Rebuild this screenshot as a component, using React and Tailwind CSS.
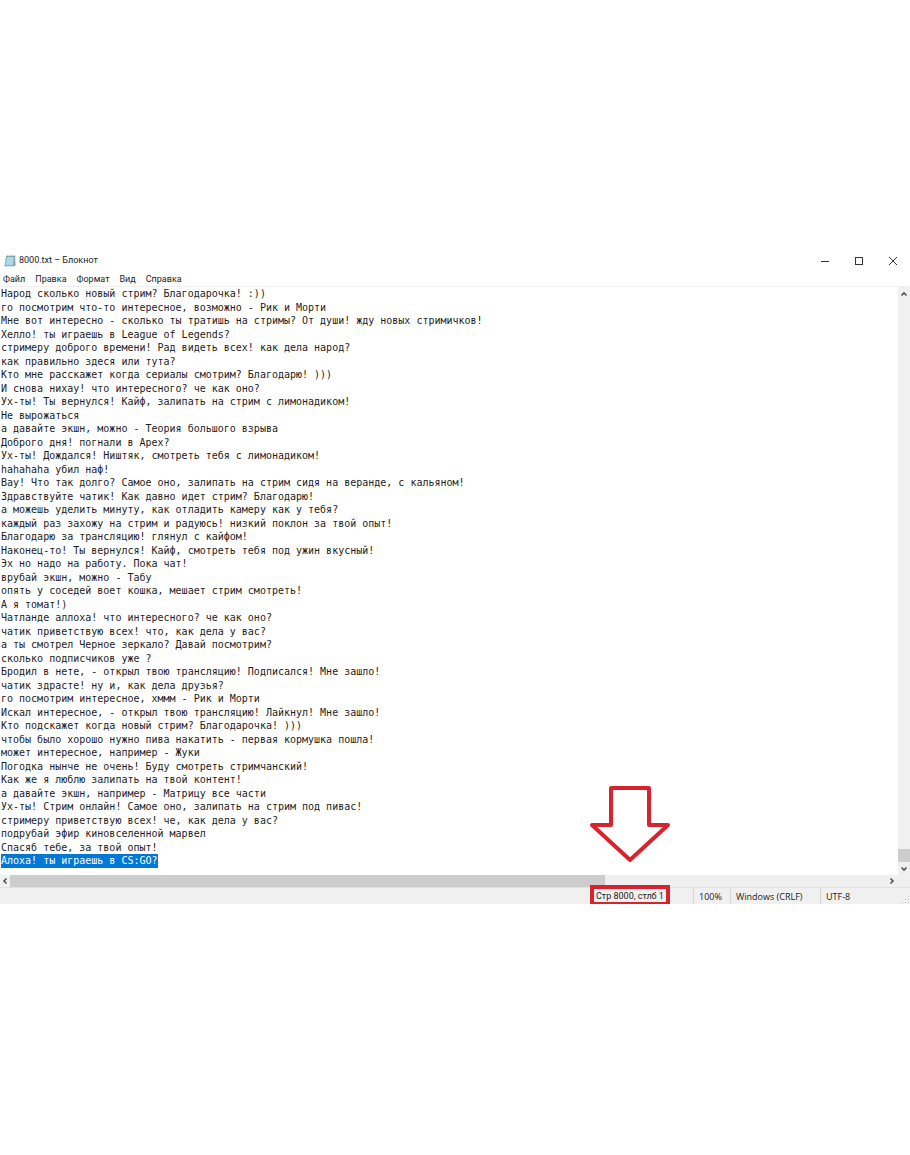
import React, { useEffect, useRef } from 'react';

const LINES = [
    'Народ сколько новый стрим? Благодарочка! :))',
    'го посмотрим что-то интересное, возможно - Рик и Морти',
    'Мне вот интересно - сколько ты тратишь на стримы? От души! жду новых стримичков!',
    'Хелло! ты играешь в League of Legends?',
    'стримеру доброго времени! Рад видеть всех! как дела народ?',
    'как правильно здеся или тута?',
    'Кто мне расскажет когда сериалы смотрим? Благодарю! )))',
    'И снова нихау! что интересного? че как оно?',
    'Ух-ты! Ты вернулся! Кайф, залипать на стрим с лимонадиком!',
    'Не вырожаться',
    'а давайте экшн, можно - Теория большого взрыва',
    'Доброго дня! погнали в Apex?',
    'Ух-ты! Дождался! Ништяк, смотреть тебя с лимонадиком!',
    'hahahaha убил наф!',
    'Вау! Что так долго? Самое оно, залипать на стрим сидя на веранде, с кальяном!',
    'Здравствуйте чатик! Как давно идет стрим? Благодарю!',
    'а можешь уделить минуту, как отладить камеру как у тебя?',
    'каждый раз захожу на стрим и радуюсь! низкий поклон за твой опыт!',
    'Благодарю за трансляцию! глянул с кайфом!',
    'Наконец-то! Ты вернулся! Кайф, смотреть тебя под ужин вкусный!',
    'Эх но надо на работу. Пока чат!',
    'врубай экшн, можно - Табу',
    'опять у соседей воет кошка, мешает стрим смотреть!',
    'А я томат!)',
    'Чатланде аллоха! что интересного? че как оно?',
    'чатик приветствую всех! что, как дела у вас?',
    'а ты смотрел Черное зеркало? Давай посмотрим?',
    'сколько подписчиков уже ?',
    'Бродил в нете, - открыл твою трансляцию! Подписался! Мне зашло!',
    'чатик здрасте! ну и, как дела друзья?',
    'го посмотрим интересное, хммм - Рик и Морти',
    'Искал интересное, - открыл твою трансляцию! Лайкнул! Мне зашло!',
    'Кто подскажет когда новый стрим? Благодарочка! )))',
    'чтобы было хорошо нужно пива накатить - первая кормушка пошла!',
    'может интересное, например - Жуки',
    'Погодка нынче не очень! Буду смотреть стримчанский!',
    'Как же я люблю залипать на твой контент!',
    'а давайте экшн, например - Матрицу все части',
    'Ух-ты! Стрим онлайн! Самое оно, залипать на стрим под пивас!',
    'стримеру приветствую всех! че, как дела у вас?',
    'подрубай эфир киновселенной марвел',
    'Спасяб тебе, за твой опыт!',
    'Алоха! ты играешь в CS:GO?',
];

const TEXT = LINES.join('\n');

const MENU = ['Файл', 'Правка', 'Формат', 'Вид', 'Справка'];

const NotepadIcon = () => (
    <svg className="w-3 h-3" viewBox="0 0 12 12" aria-hidden="true">
        <path d="M2.5 1.2H11L9.8 11H.8z" fill="#8fc3cf" stroke="#6b9aa6" strokeWidth=".6" />
        <path d="M3.2 2H9.6L8.6 9.8H1.9z" fill="#a9dbe5" />
        <path d="M11 1.2L11.5 10.4 9.8 11z" fill="#8a8f91" />
        <path d="M3 1.2H10.8" stroke="#68777c" strokeWidth="1" strokeDasharray="1 .7" />
    </svg>
);

const Chevron = ({ d }) => (
    <svg className="w-2 h-2" viewBox="0 0 8 8" fill="none" stroke="#505050" strokeWidth="1.6" aria-hidden="true">
        <path d={d} />
    </svg>
);

const TitleBar = () => (
    <header className="flex h-[19px] items-center pl-1">
        <NotepadIcon />
        <h1 className="ml-[3px] flex-1 text-[9px]">8000.txt – Блокнот</h1>
        <button type="button" aria-label="Свернуть" className="flex w-[34px] justify-center">
            <svg className="w-[10px] h-[10px]" viewBox="0 0 10 10" stroke="#333" fill="none">
                <path d="M1 5.5H9" />
            </svg>
        </button>
        <button type="button" aria-label="Развернуть" className="flex w-[34px] justify-center">
            <svg className="w-[10px] h-[10px]" viewBox="0 0 10 10" stroke="#333" fill="none">
                <rect x="1.5" y="1.5" width="7" height="7" />
            </svg>
        </button>
        <button type="button" aria-label="Закрыть" className="flex w-[34px] justify-center">
            <svg className="w-[10px] h-[10px]" viewBox="0 0 10 10" stroke="#333" fill="none">
                <path d="M1 1L9 9M9 1L1 9" />
            </svg>
        </button>
    </header>
);

const Editor = () => {
    const ref = useRef(null);

    // The last line is selected when the file opens
    useEffect(() => {
        ref.current.focus({ preventScroll: true });
        ref.current.setSelectionRange(TEXT.lastIndexOf('\n') + 1, TEXT.length);
    }, []);

    return (
        <textarea
            ref={ref}
            aria-label="Текст документа"
            defaultValue={TEXT}
            rows={LINES.length}
            wrap="off"
            spellCheck={false}
            className="block min-w-0 flex-1 resize-none overflow-hidden bg-white pl-px font-['DejaVu_Sans_Mono',monospace] text-[10px] leading-[1.35] text-[#1c1c1c] outline-none selection:bg-[#0078d7] selection:text-white"
        />
    );
};

const StatusBar = () => (
    <footer className="flex h-[17px] justify-end border-t border-[#e2e2e2] font-['Open_Sans','Noto_Sans',sans-serif] text-[9px]">
        <div className="relative flex w-[103px] items-center pl-[6px] pt-[2px] font-[Roboto,sans-serif]">
            Стр 8000, стлб 1
            {/* Marker around the line counter */}
            <div className="absolute -top-[3px] bottom-0 left-0 w-20 border-x-4 border-t-4 border-b-2 border-[#d8232e]" />
            <svg
                className="absolute bottom-[42px] left-0 h-[76px] w-20"
                viewBox="0 0 80 76"
                fill="none"
                stroke="#d8232e"
                strokeWidth="4"
                strokeLinejoin="round"
                aria-hidden="true"
            >
                <path d="M21 2H59V39H78L40 74L2 39H21Z" />
            </svg>
        </div>
        <div className="flex w-[37px] items-center border-l border-[#d7d7d7] pl-[5px] pt-[2px]">100%</div>
        <div className="flex w-[90px] items-center border-l border-[#d7d7d7] pl-[5px] pt-[2px]">Windows (CRLF)</div>
        <div className="flex w-[90px] items-center justify-between border-l border-[#d7d7d7] pl-[5px] pt-[2px]">
            UTF-8
            <svg className="h-2 w-2 self-end" viewBox="0 0 8 8" fill="#bdbdbd" aria-hidden="true">
                <path d="M6 0h1v1H6zM6 3h1v1H6zM3 3h1v1H3zM6 6h1v1H6zM3 6h1v1H3zM0 6h1v1H0z" />
            </svg>
        </div>
    </footer>
);

const App = () => {
    return (
        <main className="flex min-h-screen flex-col justify-center bg-white font-[Roboto,sans-serif] text-[#222]">
            <section className="w-full">
                <TitleBar />
                <nav className="flex h-[17px] items-center gap-[10px] border-b border-[#efefef] pl-[3px] pt-1 text-[9px]">
                    {MENU.map((item) => (
                        <button key={item} type="button">{item}</button>
                    ))}
                </nav>

                <div className="flex h-[588px]">
                    <Editor />
                    {/* Vertical scrollbar */}
                    <div className="flex w-3 flex-col bg-[#f0f0f0]">
                        <button type="button" aria-label="Вверх" className="flex h-[13px] items-center justify-center">
                            <Chevron d="M1.5 5.5L4 3L6.5 5.5" />
                        </button>
                        <div className="flex-1" />
                        <div className="h-[13px] bg-[#cdcdcd]" />
                        <button type="button" aria-label="Вниз" className="flex h-[13px] items-center justify-center">
                            <Chevron d="M1.5 2.5L4 5L6.5 2.5" />
                        </button>
                    </div>
                </div>

                <div className="bg-[#f0f0f0]">
                    {/* Horizontal scrollbar */}
                    <div className="flex h-3 pr-3">
                        <button type="button" aria-label="Влево" className="flex w-[10px] items-center justify-center">
                            <Chevron d="M5.5 1.5L3 4L5.5 6.5" />
                        </button>
                        <div className="flex-1">
                            <div className="h-full w-[68%] bg-[#cdcdcd]" />
                        </div>
                        <button type="button" aria-label="Вправо" className="flex w-[13px] items-center justify-center">
                            <Chevron d="M2.5 1.5L5 4L2.5 6.5" />
                        </button>
                    </div>
                    <StatusBar />
                </div>
            </section>
        </main>
    );
};

export default App;
